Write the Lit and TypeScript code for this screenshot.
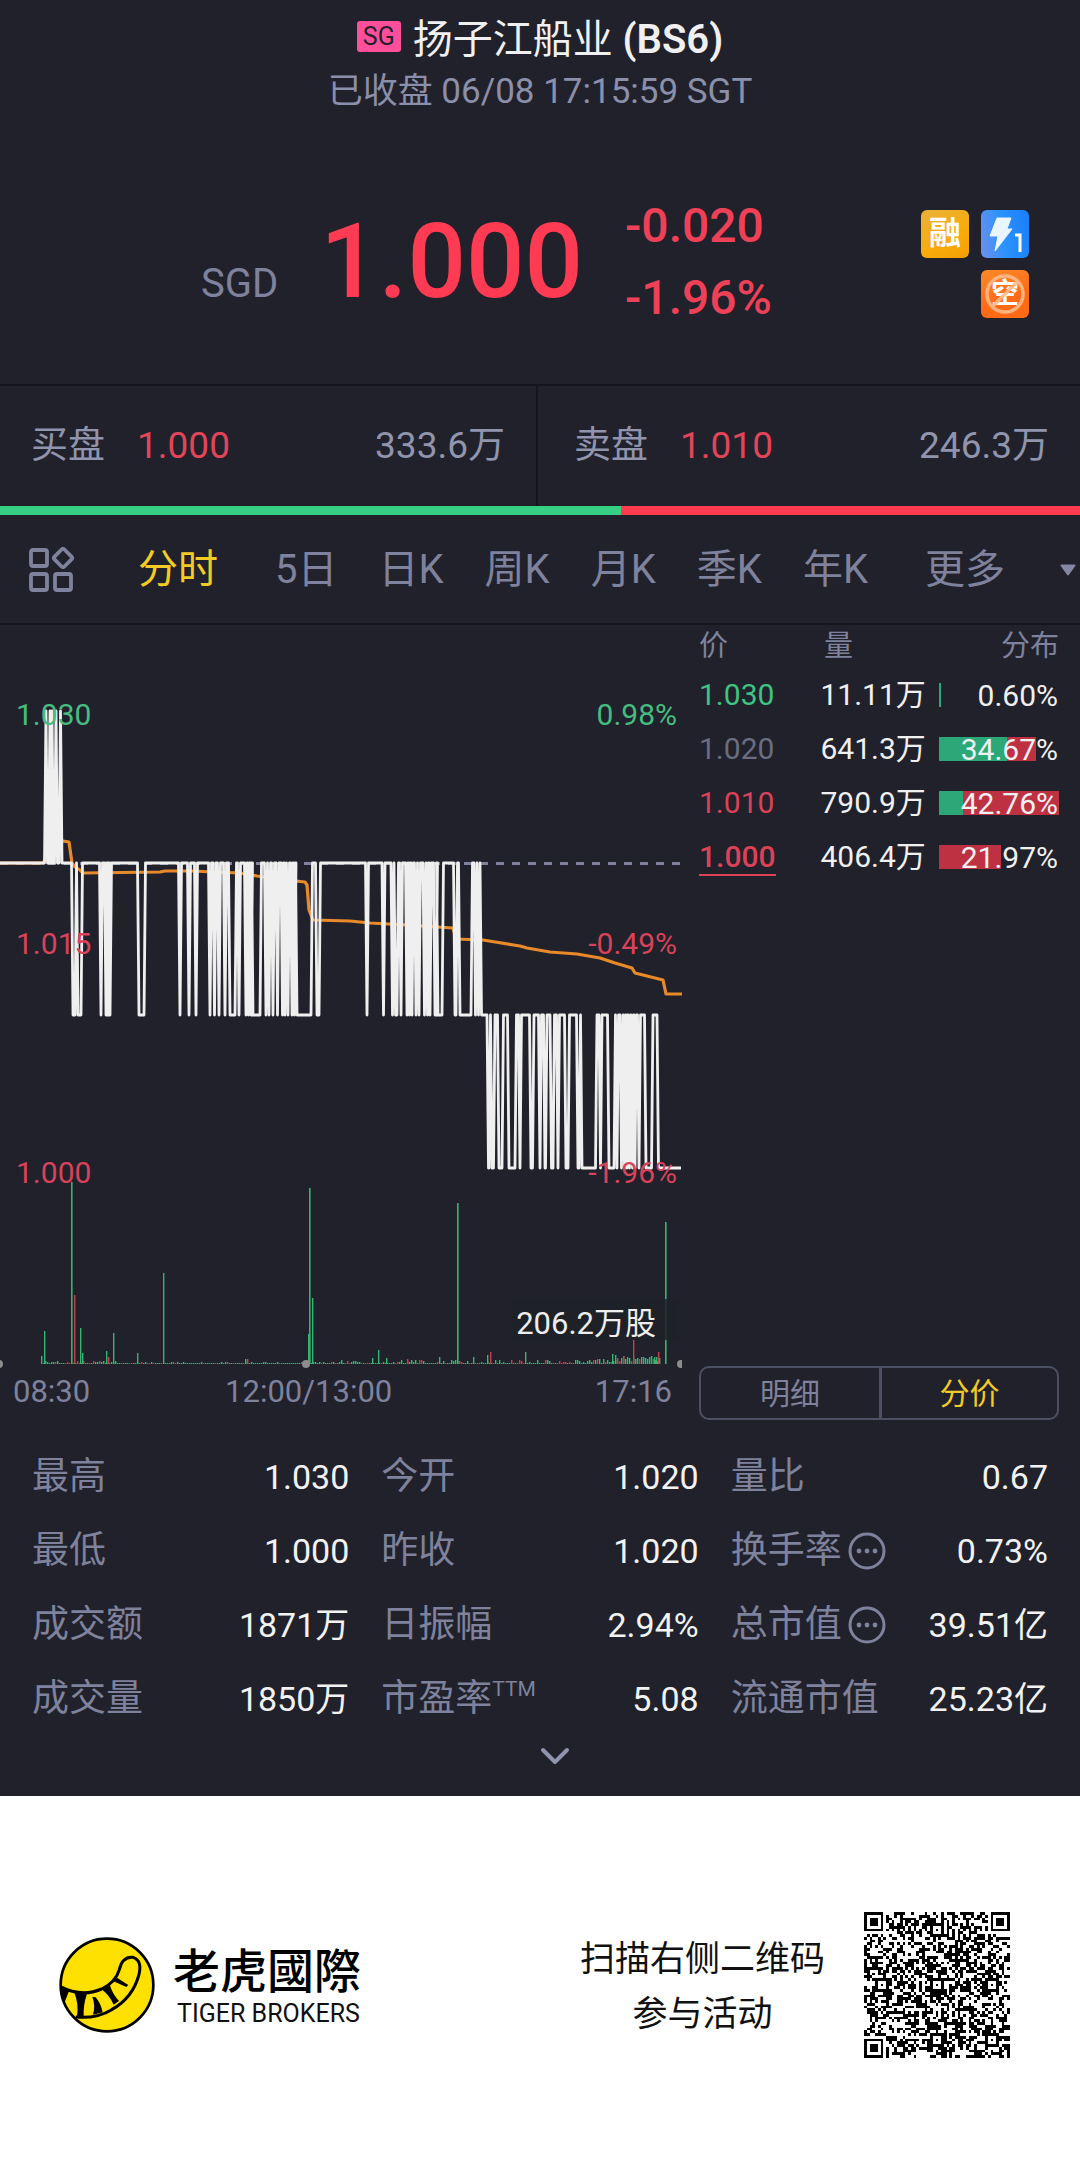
import { LitElement, html, svg, css } from "lit";
import { customElement, property, state } from "lit/decorators.js";
import { classMap } from "lit/directives/class-map.js";

const LEVEL = { high: 711, open: 863, mid: 1015, low: 1168 };
const BASE = 1364;

type Span = [number, number];
const at = (...xs: number[]): Span[] => xs.map((x) => [x, x] as Span);

/* Minutes during which the price left the level of its stretch of the session. */
const spikesUp: Span[] = at(46, 50, 52, 56, 60.5);
const dipsMorning: Span[] = [
  [73, 75], [78, 81], [101, 101], [106, 106], [108, 108], [110, 110], [139, 144],
  ...at(180, 189, 196, 210, 214.5, 219, 225), [230, 235],
  ...at(239, 246, 248.5, 251), [253, 260], ...at(266, 269, 273, 277.5, 282.5, 285, 288, 292, 294.5),
  [297, 311], [317, 319], ...at(367, 383.5, 392.5), [395.5, 397], ...at(401, 407, 409.5, 412, 416, 419, 424.5, 427.5, 430),
  [435, 436], [438, 442], [455, 456], [460, 471], ...at(475.5, 478.5),
];
const dipsAfternoon: Span[] = [
  [488.5, 489], [492, 493.5], [499, 502], [509, 515], [520, 520], [531, 532.5], [540, 540], [545, 545.5],
  [551.5, 553], [558, 558], [566, 568], [578, 579], [582, 595.5], [600.5, 600.5], [609, 614],
  ...at(617, 621.5, 624.5, 627, 629.5, 632.5, 635, 639), [646, 651.5], [658.5, 681],
];

function walk(spans: Span[], rest: number, away: number): string {
  return spans
    .map(([a, b]) => `L${a - 1.5} ${rest}L${a} ${away}L${b} ${away}${b < 681 ? `L${b + 1.5} ${rest}` : ""}`)
    .join("");
}

const pricePath =
  `M0 ${LEVEL.open}` +
  walk(spikesUp, LEVEL.open, LEVEL.high) +
  walk(dipsMorning, LEVEL.open, LEVEL.mid) +
  `L480 ${LEVEL.open}L481.5 ${LEVEL.mid}` +
  walk(dipsAfternoon, LEVEL.mid, LEVEL.low);

const averagePath =
  "M0 863L43 863L45 860L47 849L63 841L69 842L72 863L75 867L80 870L83 873L160 872L165 871L193 871L213 872L240 873L257 876L287 880L305 882L307 885L309 910L313 920L350 921L370 923L407 925L453 928L456 939L483 940L520 946L527 948L550 952L577 954L600 958L615 963L632 968L635 973L663 980L666 994L682 994";

type Bar = { x: number; h: number; up: boolean };
const tall: Array<[number, number, boolean]> = [
  [41, 8, true], [44, 33, true], [71, 182, true], [74, 69, false], [80, 36, true], [82, 11, true], [106, 13, true],
  [108, 7, false], [113, 31, true], [137, 11, true], [163, 91, true], [245, 5, true], [247, 5, false],
  [308, 30, true], [309, 176, true], [312, 66, true], [341, 4, true], [372, 6, true], [378, 14, true], [386, 6, true],
  [407, 5, false], [439, 7, true], [457, 161, true], [473, 7, true], [487, 9, true], [490, 12, false],
  [525, 12, true], [612, 10, true], [615, 9, true], [623, 8, false], [633, 24, false], [654, 7, true],
  [656, 7, true], [658, 12, false], [665, 142, true],
];

function random(seed: number): () => number {
  let s = seed;
  return () => {
    s = (s * 1664525 + 1013904223) % 4294967296;
    return s / 4294967296;
  };
}

function volumeBars(): Bar[] {
  const next = random(86);
  const bars: Bar[] = [];
  for (let x = 43; x < 660; x += 2) {
    const reach = x < 120 ? 3 : x < 340 ? 2 : x < 570 ? 4 : x < 620 ? 6 : 8;
    const chance = next();
    const floor = x > 620 ? 3 : 1;
    const h = chance > 0.55 || x > 570 ? floor + Math.floor(next() * (reach - floor + 1)) : 1;
    bars.push({ x, h, up: next() > 0.24 });
  }
  return bars.concat(tall.map(([x, h, up]) => ({ x, h, up })));
}

@customElement("intraday-chart")
export class IntradayChart extends LitElement {
  static styles = css`
    :host { display: block; padding-bottom: 6px; }
    .plot { display: block; width: 100%; height: auto; overflow: hidden; }
    .tick { font-size: 30px; }
    .green { fill: #46bd80; }
    .red { fill: #d8425a; }
    .volume { fill: #eeeeee; font-size: 31px; }
    .end { text-anchor: end; }
    .times { display: grid; grid-template-columns: 213fr auto 281fr; padding: 0 10px 0 13px; color: #7e829c; font-size: 31px; line-height: 44px; }
    .last { text-align: right; }
  `;
  private bars = volumeBars();

  render() {
    return html`
      <svg class="plot" viewBox="0 625 682 745" role="img" aria-label="分时">
        <path d="M0 863.5H682" stroke="#7d819b" stroke-width="3" stroke-dasharray="8 8" />
        <path d=${averagePath} fill="none" stroke="#e8892a" stroke-width="3.2" stroke-linejoin="round" />
        <path d=${pricePath} fill="none" stroke="#efefef" stroke-width="2.8" stroke-linejoin="round" />
        ${this.bars.map((b) => svg`<rect x=${b.x} y=${BASE - b.h} width=${b.h > 100 ? 1.6 : 1.4} height=${b.h} fill=${b.up ? "#35b573" : "#c8404f"} />`)}
        <circle cx="-1" cy="1364" r="4" fill="#8c8c8c" />
        <circle cx="306" cy="1364" r="4" fill="#8c8c8c" />
        <circle cx="681" cy="1364" r="4" fill="#8c8c8c" />
        <rect x="511" y="1299" width="167" height="41" fill="#1e2128" fill-opacity="0.85" />
        <text class="volume end" x="656" y="1334">206.2万股</text>
        <text class="tick green" x="16" y="725">1.030</text>
        <text class="tick green end" x="677" y="725">0.98%</text>
        <text class="tick red" x="16" y="954">1.015</text>
        <text class="tick red end" x="677" y="954">-0.49%</text>
        <text class="tick red" x="16" y="1183">1.000</text>
        <text class="tick red end" x="677" y="1183">-1.96%</text>
      </svg>
      <div class="times"><span>08:30</span><span>12:00/13:00</span><span class="last">17:16</span></div>
    `;
  }
}

function qrPath(): string {
  const n = 53;
  const next = random(4711);
  const grid = Array.from({ length: n }, () => Array.from({ length: n }, () => next() > 0.5));
  const block = (r0: number, c0: number, size: number, dark: (ring: number) => boolean) => {
    for (let r = 0; r < size; r++)
      for (let c = 0; c < size; c++) {
        const y = r0 + r, x = c0 + c;
        if (y < 0 || x < 0 || y >= n || x >= n) continue;
        grid[y][x] = dark(Math.min(r, c, size - 1 - r, size - 1 - c));
      }
  };
  for (let i = 8; i < n - 8; i++) {
    grid[6][i] = i % 2 === 0;
    grid[i][6] = i % 2 === 0;
  }
  for (const [r, c] of [[6, 26], [26, 6], [26, 26], [26, 46], [46, 26], [46, 46]])
    block(r - 2, c - 2, 5, (ring) => ring !== 1);
  for (const [r, c] of [[-1, -1], [-1, n - 8], [n - 8, -1]])
    block(r, c, 9, (ring) => ring === 1 || ring >= 3);
  let d = "";
  grid.forEach((row, y) => row.forEach((on, x) => { if (on) d += `M${x} ${y}h1v1h-1z`; }));
  return d;
}

interface Level { price: string; tone: string; volume: string; share: string; buy: number; sell: number; }
const levels: Level[] = [
  { price: "1.030", tone: "up", volume: "11.11万", share: "0.60%", buy: 1.5, sell: 0 },
  { price: "1.020", tone: "flat", volume: "641.3万", share: "34.67%", buy: 57, sell: 24 },
  { price: "1.010", tone: "down", volume: "790.9万", share: "42.76%", buy: 20, sell: 80 },
  { price: "1.000", tone: "down current", volume: "406.4万", share: "21.97%", buy: 0, sell: 52 },
];

@customElement("price-levels")
export class PriceLevels extends LitElement {
  @state() private mode = "分价";
  static styles = css`
    :host { display: flex; flex-direction: column; justify-content: space-between; padding: 0 21px 0 17px; }
    table { width: 100%; border-collapse: collapse; table-layout: fixed; font-size: 30px; }
    th, td { padding: 0; font-weight: 400; text-align: right; white-space: nowrap; }
    th { height: 43px; color: #7e829c; font-size: 29px; line-height: 43px; }
    td { height: 54px; color: #f0f0f0; line-height: 36px; }
    .c1 { width: 30%; }
    .c3 { width: 37%; }
    th.c1, td.price { text-align: left; }
    th.c2 { text-align: left; padding-left: 17px; }
    .up { color: #3fc283; }
    .flat { color: #696d80; }
    .down { color: #dc4257; }
    .current span { font-weight: 500; border-bottom: 2px solid #dc4257; }
    .share { display: flex; margin-left: 13px; height: 24px; line-height: 25px; position: relative; }
    .buy { background: #2ca777; }
    .sell { background: #bd3142; }
    .pct { position: absolute; right: 1px; top: 0; }
    .modes { display: grid; grid-template-columns: 1fr 1fr; border: 2px solid #4d5062; border-radius: 10px; }
    button { appearance: none; border: 0; background: none; padding: 2px 0 0; margin: 0; font: inherit; font-size: 30px; line-height: 48px; color: #7e829c; }
    button + button { border-left: 3px solid #4d5062; }
    .on { color: #f2cc24; }
  `;
  render() {
    return html`
      <table>
        <thead><tr><th class="c1" scope="col">价</th><th class="c2" scope="col">量</th><th class="c3" scope="col">分布</th></tr></thead>
        <tbody>
          ${levels.map((l) => html`<tr>
            <td class="price ${l.tone}"><span>${l.price}</span></td>
            <td>${l.volume}</td>
            <td><div class="share">
              <div class="buy" style="width:${l.buy}%"></div><div class="sell" style="width:${l.sell}%"></div>
              <span class="pct">${l.share}</span>
            </div></td>
          </tr>`)}
        </tbody>
      </table>
      <div class="modes">
        ${["明细", "分价"].map((m) => html`<button type="button" class=${classMap({ on: m === this.mode })} aria-pressed=${m === this.mode} @click=${() => (this.mode = m)}>${m}</button>`)}
      </div>
    `;
  }
}

@customElement("quote-stat")
export class QuoteStat extends LitElement {
  @property() label = "";
  @property() value = "";
  @property() mark = "";
  @property({ type: Boolean }) info = false;
  static styles = css`
    :host { display: flex; justify-content: space-between; align-items: center; line-height: 74px; white-space: nowrap; }
    .label { display: flex; align-items: center; color: #7e829c; font-size: 37px; }
    .mark { align-self: flex-start; font-size: 21px; line-height: 54px; }
    .value { color: #f2f2f2; font-size: 34px; }
    button { appearance: none; border: 0; background: none; padding: 0; margin: 0 0 0 6px; display: flex; color: #7e829c; }
  `;
  render() {
    return html`
      <span class="label">${this.label}${this.mark ? html`<span class="mark">${this.mark}</span>` : ""}
        ${this.info ? html`<button type="button" aria-label=${this.label}><svg width="38" height="38" viewBox="0 0 38 38">
          <circle cx="19" cy="19" r="17" fill="none" stroke="currentColor" stroke-width="3" />
          <g fill="currentColor"><circle cx="11" cy="19" r="2.4" /><circle cx="19" cy="19" r="2.4" /><circle cx="27" cy="19" r="2.4" /></g>
        </svg></button>` : ""}</span>
      <span class="value">${this.value}</span>
    `;
  }
}

const stats = [
  { label: "最高", value: "1.030" }, { label: "今开", value: "1.020" }, { label: "量比", value: "0.67" },
  { label: "最低", value: "1.000" }, { label: "昨收", value: "1.020" }, { label: "换手率", value: "0.73%", info: true },
  { label: "成交额", value: "1871万" }, { label: "日振幅", value: "2.94%" }, { label: "总市值", value: "39.51亿", info: true },
  { label: "成交量", value: "1850万" }, { label: "市盈率", value: "5.08", mark: "TTM" }, { label: "流通市值", value: "25.23亿" },
];
const periods = ["分时", "5日", "日K", "周K", "月K", "季K", "年K"];

@customElement("app-root")
export class AppRoot extends LitElement {
  @state() private period = "分时";

  static styles = css`
    :host { display: block; background: #fff; color: #f0f0f0; font-family: Roboto, "Noto Sans CJK SC", sans-serif; }
    button { appearance: none; border: 0; background: none; padding: 0; margin: 0; font: inherit; color: inherit; white-space: nowrap; }
    .panel { background: #21212b; padding-bottom: 20px; }
    .head { padding-top: 14px; text-align: center; }
    .title { display: flex; justify-content: center; align-items: center; gap: 12px; margin: 0; font-size: 40px; font-weight: 400; line-height: 52px; }
    .code { font-weight: 600; }
    .market { padding: 0 6px; margin-bottom: 8px; background: #ff4f9a; border-radius: 3px; color: #21212b; font-size: 25px; line-height: 31px; }
    .status { margin: 3px 0 0; color: #8b8fa9; font-size: 35px; line-height: 46px; }
    .quote { display: flex; align-items: center; padding: 75px 51px 50px 201px; }
    .last { display: flex; align-items: baseline; gap: 42px; color: #ff3b54; font-size: 103px; font-weight: 500; line-height: 104px; }
    .currency { color: #7e829c; font-size: 40px; font-weight: 400; line-height: 40px; }
    .change { margin-left: 42px; color: #ee4057; font-size: 48px; font-weight: 500; line-height: 72px; }
    .change div { white-space: nowrap; }
    .badges { margin-left: auto; align-self: flex-start; padding-top: 20px; display: grid; grid-template-columns: 48px 48px; gap: 12px; }
    .badge { position: relative; height: 48px; border-radius: 6px; color: #fff; font-size: 32px; font-weight: 700; line-height: 47px; text-align: center; }
    .margin { background: linear-gradient(150deg, #e8b13a, #f9ab0a 60%, #f5a005); }
    .flash { background: linear-gradient(80deg, #6f8fec, #2b93fb 45%, #1b7dfc); }
    .short { grid-column: 2; background: linear-gradient(160deg, #fb8a2a, #ff6a17 60%); font-size: 28px; }
    .badge svg { position: absolute; left: 0; top: 0; }
    .book { display: grid; grid-template-columns: 536fr 544fr; border-top: 2px solid #15151d; font-size: 37px; line-height: 120px; color: #9094ac; }
    .side { display: flex; gap: 32px; padding: 0 31px; }
    .side + .side { border-left: 2px solid #15151d; padding-left: 36px; }
    .side .px { color: #e0455a; }
    .side .qty { margin-left: auto; }
    .ratio { display: flex; height: 9px; background: #ff3b4f; }
    .bids { background: #38d084; }
    .tabs { display: flex; align-items: center; gap: 41px; padding: 2px 4px 0 29px; border-bottom: 2px solid #15151d; color: #7e829c; font-size: 40px; line-height: 106px; }
    .layout { display: flex; margin-right: 22px; }
    .tab:nth-child(2) { margin-right: 16px; }
    .tabs .on { color: #f2cc24; }
    .more { flex: 1; display: flex; justify-content: space-between; align-items: center; margin-left: 16px; }
    .trade { display: grid; grid-template-columns: 682fr 398fr; }
    .stats { display: grid; grid-template-columns: repeat(3, 1fr); column-gap: 32px; padding: 20px 32px 0; }
    .expand { display: flex; justify-content: center; align-items: center; width: 100%; height: 40px; padding-left: 30px; }
    .foot { display: flex; align-items: center; padding: 116px 70px 118px 59px; color: #111; }
    .brand { display: flex; align-items: center; gap: 18px; }
    .names { display: flex; flex-direction: column; padding-top: 4px; }
    .cn { color: #000; font-size: 47px; font-weight: 500; line-height: 54px; }
    .en { padding-left: 4px; font-size: 25px; line-height: 30px; }
    .scan { margin: 0 39px 0 auto; padding-top: 4px; font-size: 35px; line-height: 55px; text-align: center; }
  `;

  render() {
    return html`
      <main class="panel">
        <header class="head">
          <h1 class="title"><span class="market">SG</span><span>扬子江船业 <span class="code">(BS6)</span></span></h1>
          <p class="status">已收盘 06/08 17:15:59 SGT</p>
        </header>
        <section class="quote">
          <div class="last"><span class="currency">SGD</span><span>1.000</span></div>
          <div class="change"><div>-0.020</div><div>-1.96%</div></div>
          <div class="badges">
            <span class="badge margin">融</span>
            <span class="badge flash"><svg width="48" height="48" viewBox="0 0 48 48">
              <path d="M16 8h14l-4 11h5L14 41l3-15H9z" fill="#eaf6ff" stroke="#eaf6ff" stroke-width="1" stroke-linejoin="round" />
              <path d="M34 25h5v17" fill="none" stroke="#fff" stroke-width="3" />
            </svg></span>
            <span class="badge short">空<svg width="48" height="48" viewBox="0 0 48 48">
              <g fill="none" stroke="#ffb98a" stroke-width="3.5" stroke-opacity="0.9"><circle cx="24" cy="24" r="18" /><path d="M12 36L36 12" /></g>
            </svg></span>
          </div>
        </section>
        <section class="book">
          <div class="side"><span>买盘</span><span class="px">1.000</span><span class="qty">333.6万</span></div>
          <div class="side"><span>卖盘</span><span class="px">1.010</span><span class="qty">246.3万</span></div>
        </section>
        <div class="ratio"><div class="bids" style="width:57.5%"></div></div>
        <nav class="tabs">
          <button type="button" class="layout" aria-label="布局"><svg width="46" height="46" viewBox="0 0 46 46" fill="none" stroke="#7e829c" stroke-width="3.8" stroke-linejoin="round">
            <rect x="2" y="3" width="16" height="16" rx="2" /><rect x="2" y="27" width="16" height="16" rx="2" /><rect x="26" y="27" width="16" height="16" rx="2" />
            <rect x="27" y="4" width="14" height="14" rx="2" transform="rotate(45 34 11)" />
          </svg></button>
          ${periods.map((p) => html`<button type="button" class=${classMap({ tab: true, on: p === this.period })} @click=${() => (this.period = p)}>${p}</button>`)}
          <button type="button" class="more"><span>更多</span><svg width="16" height="12" viewBox="0 0 16 12"><path d="M1.500 1.500h13L8 10.500z" fill="#8488a2" stroke="#8488a2" stroke-width="2" stroke-linejoin="round" /></svg></button>
        </nav>
        <section class="trade">
          <intraday-chart></intraday-chart>
          <price-levels></price-levels>
        </section>
        <section class="stats">
          ${stats.map((s) => html`<quote-stat .label=${s.label} .value=${s.value} .mark=${s.mark ?? ""} .info=${!!s.info}></quote-stat>`)}
        </section>
        <button type="button" class="expand" aria-label="展开"><svg width="30" height="20" viewBox="0 0 30 20"><path d="M3 4l12 12L27 4" fill="none" stroke="#9094ac" stroke-width="4" stroke-linecap="round" stroke-linejoin="round" /></svg></button>
      </main>
      <footer class="foot">
        <div class="brand">
          <svg width="96" height="96" viewBox="0 0 288 288" aria-hidden="true">
            <circle cx="144" cy="144" r="139" fill="#ffe100" />
            <g fill="#000">
              <path d="M3 148L30 162L16 198Q5 178 3 148z" />
              <path d="M46 167L84 170Q72 205 74 240L54 239Q60 200 46 167z" />
              <path d="M110 181Q125 198 131 226L102 233Q110 205 100 180z" />
              <path d="M128 157L152 141Q158 168 180 192L164 203Q152 176 128 157z" />
              <path d="M162 132L174 122L208 144L202 150z" />
            </g>
            <path d="M4 149Q68 182 128 156Q170 136 181 98Q190 58 222 61Q250 70 240 112Q222 182 158 218Q112 246 50 240" fill="none" stroke="#000" stroke-width="9" />
            <circle cx="144" cy="144" r="139" fill="none" stroke="#000" stroke-width="8" />
          </svg>
          <div class="names"><span class="cn">老虎國際</span><span class="en">TIGER BROKERS</span></div>
        </div>
        <div class="scan">扫描右侧二维码<br />参与活动</div>
        <svg width="146" height="146" viewBox="0 0 53 53" shape-rendering="crispEdges" role="img" aria-label="二维码"><path d=${qrPath()} fill="#000" /></svg>
      </footer>
    `;
  }
}
